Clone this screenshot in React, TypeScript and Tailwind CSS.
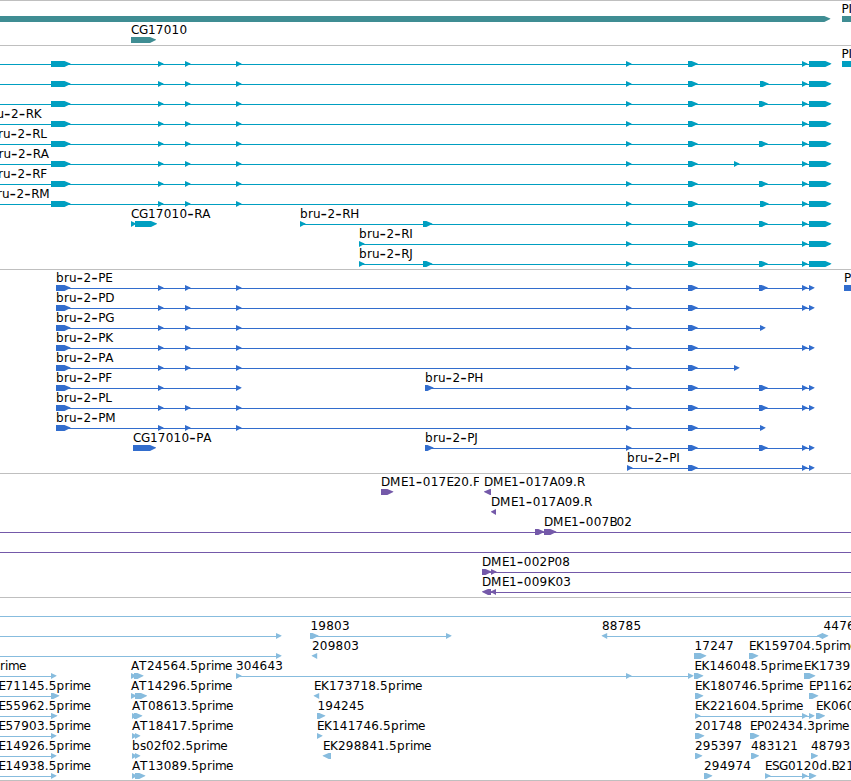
type Span = [number, number];

type Feature = {
  label?: string;
  labelX?: number;
  clip?: number;
  line?: Span;
  right?: Span[];
  left?: Span[];
};

type Track = { name: string; color: string; height: string; size: number; pitch: number; rows: Feature[][] };

const WIDTH = 851;

// Advance widths of the label face, in pixels.
const ADVANCE: Record<string, number> = {
  b: 8, r: 5, u: 7.5, p: 8, i: 3, m: 11, e: 7, s: 6, f: 4, d: 8, l: 3,
  A: 8, B: 7, C: 8, D: 9, E: 7, F: 7, G: 9, H: 9, I: 3, J: 4, K: 8, L: 6, M: 11, P: 7, R: 8, S: 7, T: 8,
  "-": 7, ".": 4,
};

const tip = (x: number): Span => [x, x + 5.5];
const S158 = tip(158);
const S185 = tip(185);
const S236 = tip(236);
const S626 = tip(626);
const S734 = tip(734);
const S760 = tip(760);
const S802 = tip(802);
const S809 = tip(809);
const E688: Span = [688, 697.7];
const E759: Span = [759, 767.7];
const E760: Span = [760, 768.7];
const UTR: Span = [809, 831.3];

const start: Span[] = [S158, S185, S236, S626, E688];
const transcript = (label: string, labelX: number, extra: Span[]): Feature => ({
  label, labelX, line: [0, 830], right: [[51, 70.5], ...start, ...extra, S802, UTR],
});
const protein = (label: string, end: number, exons: Span[]): Feature => ({
  label, labelX: 56, line: [56, end], right: [[56, 70.5], ...exons],
});
const est = (label: string, x: number, spans: Span[]): Feature => ({ label, labelX: x, right: spans });
const leftEst = (label: string, end: number): Feature => ({
  label, labelX: -1.5, line: [0, 52], right: [[51, end]],
});

const tracks: Track[] = [
  {
    name: "genes", color: "#3f8d93", height: "h-[45px]", size: 44, pitch: 21,
    rows: [
      [{ right: [[-10, 830.3]] }, { label: "PI", labelX: 841.5, right: [[842, 870]] }],
      [{ label: "CG17010", labelX: 131, right: [[131, 156]] }],
    ],
  },
  {
    name: "transcripts", color: "#009fc1", height: "h-[224px]", size: 223, pitch: 20,
    rows: [
      [transcript("", 0, []), { label: "PI", labelX: 841.5, right: [[842, 870]] }],
      [transcript("", 0, [E760])],
      [transcript("", 0, [E759])],
      [transcript("bru-2-RK", -16.5, [])],
      [transcript("bru-2-RL", -10, [E759])],
      [transcript("bru-2-RA", -9.5, [S734])],
      [transcript("bru-2-RF", -10, [E759])],
      [transcript("bru-2-RM", -11, [E760])],
      [
        { label: "CG17010-RA", labelX: 131, right: [[131, 136], [135, 157]] },
        { label: "bru-2-RH", labelX: 300, line: [300, 830], right: [tip(300), [423, 432.3], S626, E688, E759, S802, UTR] },
      ],
      [{ label: "bru-2-RI", labelX: 359, line: [359, 830], right: [tip(359), S626, E688, S802, UTR] }],
      [{ label: "bru-2-RJ", labelX: 359, line: [359, 830], right: [tip(359), [423, 432.3], S626, E688, E759, S802, UTR] }],
    ],
  },
  {
    name: "proteins", color: "#326dcd", height: "h-[204px]", size: 203, pitch: 20,
    rows: [
      [protein("bru-2-PE", 812, [...start, E759, S802, S809]), { label: "P", labelX: 844, right: [[844, 870]] }],
      [protein("bru-2-PD", 812, [...start, S802, S809])],
      [protein("bru-2-PG", 763, [...start, S760])],
      [protein("bru-2-PK", 812, [...start, S802, S809])],
      [protein("bru-2-PA", 737, [...start, S734])],
      [
        protein("bru-2-PF", 239, [S158, S236]),
        { label: "bru-2-PH", labelX: 425, line: [425, 812], right: [[425, 433.5], S626, E688, E759, S802, S809] },
      ],
      [protein("bru-2-PL", 812, [...start, E759, S802, S809])],
      [protein("bru-2-PM", 763, [...start, S760])],
      [
        { label: "CG17010-PA", labelX: 133, right: [[133, 156]] },
        { label: "bru-2-PJ", labelX: 425, line: [425, 812], right: [[425, 433.5], S626, E688, E759, S802, S809] },
      ],
      [{ label: "bru-2-PI", labelX: 627, line: [627, 812], right: [tip(627), E688, S802, S809] }],
    ],
  },
  {
    name: "clones", color: "#7459a9", height: "h-[124px]", size: 123, pitch: 20,
    rows: [
      [
        { label: "DME1-017E20.F", labelX: 381, clip: 479, right: [[381, 393.3]] },
        { label: "DME1-017A09.R", labelX: 484, left: [[484, 491]] },
      ],
      [{ label: "DME1-017A09.R", labelX: 491, left: [[491, 496]] }],
      [{ label: "DME1-007B02", labelX: 544, line: [0, WIDTH], right: [[535, 544.3], [544, 556.3]] }],
      [{ line: [0, WIDTH] }],
      [{ label: "DME1-002P08", labelX: 482, line: [482, WIDTH], right: [[482, 491.5], tip(491)] }],
      [{ label: "DME1-009K03", labelX: 482, line: [484, WIDTH], left: [[482, 491], [490.5, 496]] }],
    ],
  },
  {
    name: "ests", color: "#87bcde", height: "h-[183px]", size: 182, pitch: 20,
    rows: [
      [{ line: [0, WIDTH] }],
      [
        { line: [0, 279], right: [tip(276)] },
        { label: "19803", labelX: 310.5, line: [310, 449], right: [[310, 318.5], tip(446)] },
        { label: "88785", labelX: 602, line: [604, 820], left: [tip(601.7), tip(817)] },
        { label: "4476", labelX: 823.5, right: [[822, 828.3]] },
      ],
      [
        { line: [0, 279], right: [tip(276)] },
        { label: "209803", labelX: 312, left: [tip(311.7)] },
        est("17247", 694.5, [[694, 706.3]]),
        est("EK159704.5prime", 749, [[749, 758.3]]),
      ],
      [
        { label: "rime", labelX: 0, line: [0, 54], right: [tip(51)] },
        est("AT24564.5prime", 131, [[131, 136.5], [134, 143.5]]),
        { label: "304643", labelX: 236, line: [236, 691], right: [S236, S626, tip(688)] },
        est("EK146048.5prime", 694.5, [[694, 703.3]]),
        est("EK1739", 804, [[804, 815.3]]),
      ],
      [
        leftEst("E71145.5prime", 59.3),
        est("AT14296.5prime", 131, [[131, 136.5], [135, 147]]),
        { label: "EK173718.5prime", labelX: 314, left: [tip(313.7)] },
        est("EK180746.5prime", 695, [[695, 703.3]]),
        est("EP1162", 809, [[809, 818.3]]),
      ],
      [
        leftEst("E55962.5prime", 57.3),
        est("AT08613.5prime", 132, [[132, 137.5], [134, 142.3]]),
        est("194245", 317.5, [[317, 325.3]]),
        { label: "EK221604.5prime", labelX: 695, line: [695, 812], right: [tip(695), S802, S809] },
        est("EK060", 816, [[816, 825]]),
      ],
      [
        leftEst("E57903.5prime", 56.5),
        est("AT18417.5prime", 132, [[132, 137], [135, 140.3]]),
        est("EK141746.5prime", 317, [tip(317)]),
        est("201748", 695, [[695, 704.3]]),
        est("EP02434.3prime", 750, [[750, 759.3]]),
      ],
      [
        leftEst("E14926.5prime", 56.5),
        est("bs02f02.5prime", 132, [[132, 137], [135, 140.3]]),
        { label: "EK298841.5prime", labelX: 323, left: [[322.7, 331]] },
        est("295397", 695, [[695, 702.3]]),
        est("483121", 751, [[751, 759]]),
        est("48793", 811, [[811, 818]]),
      ],
      [
        leftEst("E14938.5prime", 56.5),
        est("AT13089.5prime", 132, [[132, 137], [135, 145.3]]),
        est("294974", 704, [[704, 712.3]]),
        { label: "ESG0120d.B21", labelX: 765, line: [765, 812], right: [tip(765), S802, [809, 816.3]] },
      ],
    ],
  },
];

function charPositions(label: string, x: number) {
  let cursor = x;
  return [...label].map((ch) => {
    const at = cursor;
    cursor += ADVANCE[ch] ?? 7.85;
    return at;
  });
}

// The label face has a wide hyphen, so hyphens are set larger than the letters.
function Label({ label, x, y }: { label: string; x: number; y: number }) {
  const at = charPositions(label, x);
  const parts = label.split(/(-)/).filter(Boolean);
  let offset = 0;
  return (
    <text className="fill-black">
      {parts.map((part, i) => {
        const xs = at.slice(offset, offset + part.length).join(" ");
        offset += part.length;
        return part === "-" ? (
          <tspan key={i} x={xs} y={y + 1} className="text-[18px]">
            {part}
          </tspan>
        ) : (
          <tspan key={i} x={xs} y={y}>
            {part}
          </tspan>
        );
      })}
    </text>
  );
}

function arrowPoints([from, to]: Span, y: number, reverse: boolean) {
  const head = Math.min(6, to - from);
  const base = reverse ? from + head : to - head;
  const point = reverse ? from : to;
  const back = reverse ? to : from;
  return `${back},${y - 3} ${base},${y - 3} ${point},${y - 0.5} ${point},${y + 0.1} ${base},${y + 3} ${back},${y + 3}`;
}

function FeatureGlyph({ feature, y }: { feature: Feature; y: number }) {
  const { label, labelX = 0, line, right = [], left = [], clip } = feature;
  return (
    <g>
      {line && <rect x={line[0]} y={y} width={line[1] - line[0]} height={1} />}
      {right.map((span, i) => (
        <polygon key={`r${i}`} points={arrowPoints(span, y, false)} />
      ))}
      {left.map((span, i) => (
        <polygon key={`l${i}`} points={arrowPoints(span, y, true)} />
      ))}
      {label && <Label label={label} x={labelX} y={y - 6} />}
      {clip && <rect x={clip} y={y - 17} width={5} height={13} className="fill-white" />}
    </g>
  );
}

function TrackPanel({ track }: { track: Track }) {
  return (
    <section className={`w-full shrink-0 overflow-hidden border-t border-[#bfbfbf] ${track.height}`}>
      <svg
        width={WIDTH}
        height={track.size}
        fill={track.color}
        aria-label={track.name}
        className="block font-['DejaVu_Sans',sans-serif] text-[12px]"
      >
        {track.rows.map((row, r) => (
          <g key={r}>
            {row.map((feature, f) => (
              <FeatureGlyph key={f} feature={feature} y={18 + r * track.pitch} />
            ))}
          </g>
        ))}
      </svg>
    </section>
  );
}

export default function App() {
  return (
    <main className="flex h-[781px] w-[851px] flex-col overflow-hidden border-b border-[#bfbfbf] bg-white">
      {tracks.map((track) => (
        <TrackPanel key={track.name} track={track} />
      ))}
    </main>
  );
}
